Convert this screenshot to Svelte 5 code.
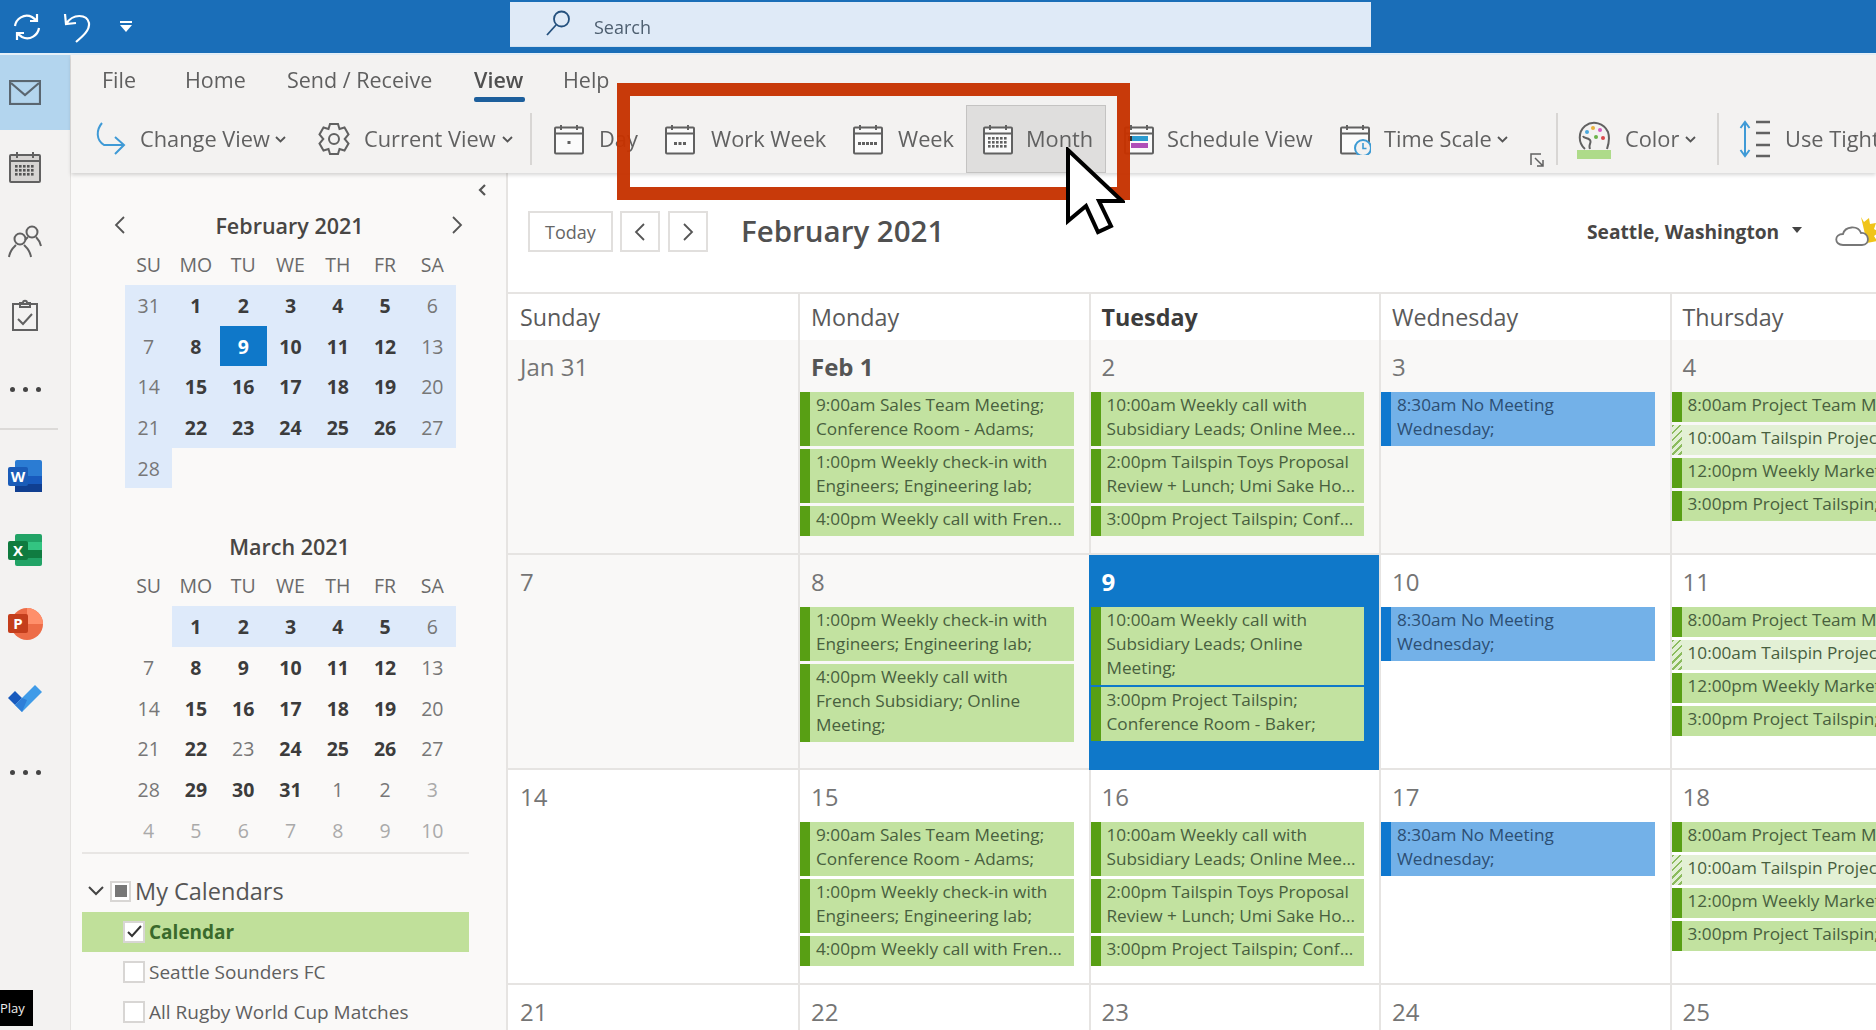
<script>
  const tabs = [
    { t: 'File', w: 83 },
    { t: 'Home', w: 102 },
    { t: 'Send / Receive', w: 187 },
    { t: 'View', w: 89, on: true },
    { t: 'Help', w: 60 }
  ];

  const tools = [
    { t: 'Change View', i: 'change', w: 223, gap: 13, caret: true },
    { t: 'Current View', i: 'gear', w: 212, gap: 14, caret: true },
    { sep: true, w: 23 },
    { t: 'Day', i: 'day', w: 111, gap: 14 },
    { t: 'Work Week', i: 'ww', w: 188, gap: 15 },
    { t: 'Week', i: 'week', w: 114, gap: 14 },
    { t: 'Month', i: 'month', w: 140, gap: 12, pl: 15, on: true },
    { t: 'Schedule View', i: 'sched', w: 233, gap: 12, pl: 17 },
    { t: 'Time Scale', i: 'time', w: 191, gap: 13, caret: true },
    { i: 'expand', w: 26, small: true },
    { sep: true, w: 21 },
    { t: 'Color', i: 'color', w: 140, gap: 14, caret: true },
    { sep: true, w: 22 },
    { t: 'Use Tight Margins', i: 'tight', w: 260, gap: 14 }
  ];

  const dow = ['SU', 'MO', 'TU', 'WE', 'TH', 'FR', 'SA'];
  const rng = (a, b) => Array.from({ length: b - a + 1 }, (_, i) => a + i);

  // k: b = bold, w = weekend grey, x = lighter, s = selected; hl = shaded range
  const mk = (n, k, hl) => ({ n, k, hl });
  const feb = [
    mk(31, 'w', 1), ...rng(1, 5).map((n) => mk(n, 'b', 1)), mk(6, 'w', 1),
    mk(7, 'w', 1), mk(8, 'b', 1), mk(9, 's', 1), ...rng(10, 12).map((n) => mk(n, 'b', 1)), mk(13, 'w', 1),
    mk(14, 'w', 1), ...rng(15, 19).map((n) => mk(n, 'b', 1)), mk(20, 'w', 1),
    mk(21, 'w', 1), ...rng(22, 26).map((n) => mk(n, 'b', 1)), mk(27, 'w', 1),
    mk(28, 'w', 1)
  ];
  const mar = [
    mk('', '', 0), ...rng(1, 5).map((n) => mk(n, 'b', 1)), mk(6, 'w', 1),
    mk(7, 'w', 0), mk(8, 'b', 0), mk(9, 'b', 0), ...rng(10, 12).map((n) => mk(n, 'b', 0)), mk(13, 'w', 0),
    mk(14, 'w', 0), ...rng(15, 19).map((n) => mk(n, 'b', 0)), mk(20, 'w', 0),
    mk(21, 'w', 0), mk(22, 'b', 0), mk(23, 'w', 0), ...rng(24, 26).map((n) => mk(n, 'b', 0)), mk(27, 'w', 0),
    mk(28, 'w', 0), ...rng(29, 31).map((n) => mk(n, 'b', 0)), mk(1, 'w', 0), mk(2, 'w', 0), mk(3, 'x', 0),
    ...[4, 5, 6, 7, 8, 9, 10].map((n) => mk(n, 'x', 0))
  ];
  const months = [
    { name: 'February 2021', cells: feb, nav: true },
    { name: 'March 2021', cells: mar }
  ];

  const sales = '9:00am Sales Team Meeting;\nConference Room - Adams;';
  const checkin = '1:00pm Weekly check-in with\nEngineers; Engineering lab;';
  const fren = '4:00pm Weekly call with Fren...';
  const subs = '10:00am Weekly call with\nSubsidiary Leads; Online Mee...';
  const umi = '2:00pm Tailspin Toys Proposal\nReview + Lunch; Umi Sake Ho...';
  const conf = '3:00pm Project Tailspin; Conf...';
  const noMeet = '8:30am No Meeting\nWednesday;';
  const thu = [
    { t: '8:00am Project Team Meeting; Room' },
    { t: '10:00am Tailspin Project Review', tent: true },
    { t: '12:00pm Weekly Marketing Sync' },
    { t: '3:00pm Project Tailspin; Conference' }
  ];
  const g = (...l) => l.map((t) => ({ t }));
  const blue = [{ t: noMeet, blue: true }];
  const mon = g(sales, checkin, fren);
  const tue = g(subs, umi, conf);

  const rows = [
    { past: true, cells: [
      { d: 'Jan 31' }, { d: 'Feb 1', bold: true, ev: mon }, { d: '2', ev: tue }, { d: '3', ev: blue }, { d: '4', ev: thu }
    ] },
    { cells: [
      { d: '7', past: true },
      { d: '8', past: true, ev: g(checkin, '4:00pm Weekly call with\nFrench Subsidiary; Online\nMeeting;') },
      { d: '9', today: true, ev: g('10:00am Weekly call with\nSubsidiary Leads; Online\nMeeting;', '3:00pm Project Tailspin;\nConference Room - Baker;') },
      { d: '10', ev: blue }, { d: '11', ev: thu }
    ] },
    { cells: [
      { d: '14' }, { d: '15', ev: mon }, { d: '16', ev: tue }, { d: '17', ev: blue }, { d: '18', ev: thu }
    ] },
    { cells: [{ d: '21' }, { d: '22' }, { d: '23' }, { d: '24' }, { d: '25' }] }
  ];
  const heads = ['Sunday', 'Monday', 'Tuesday', 'Wednesday', 'Thursday'];
  const dots = (xs, ys) => xs.flatMap((x) => ys.map((y) => ({ x, y })));
</script>

{#snippet cal(kind)}
  <svg width="32" height="32" viewBox="0 0 32 32" fill="none" stroke="#616161" stroke-width="2">
    <rect x="2" y="4.5" width="28" height="26" rx="1" fill="#fbfbfb" />
    <path d="M2 10.5h28M8 2v5M24 2v5" />
    {#if kind === 'day'}
      <rect x="14.5" y="18" width="3" height="3" fill="#616161" stroke="none" />
    {:else if kind === 'ww'}
      {#each [10, 14.5, 19] as x}<rect {x} y="19" width="3" height="3" fill="#616161" stroke="none" />{/each}
    {:else if kind === 'week'}
      {#each [6, 10, 14, 18, 22] as x}<rect {x} y="19" width="3" height="3" fill="#616161" stroke="none" />{/each}
    {:else if kind === 'month'}
      {#each dots([6, 10, 14, 18, 22], [14, 18, 22]) as p}<rect x={p.x} y={p.y} width="2.6" height="2.6" fill="#616161" stroke="none" />{/each}
    {:else if kind === 'sched'}
      <rect x="8" y="13" width="17" height="5" fill="#2b9bd0" stroke="none" />
      <rect x="8" y="20" width="17" height="5" fill="#b04fb8" stroke="none" />
      <rect x="5" y="13" width="4" height="5" fill="#333" stroke="none" />
    {:else if kind === 'time'}
      <circle cx="24" cy="25" r="8" fill="#f3f2f1" stroke="#3d9bd4" />
      <path d="M24 20v5.5h3.5" stroke="#3d9bd4" stroke-width="1.6" />
    {/if}
  </svg>
{/snippet}

{#snippet toolIcon(i)}
  {#if i === 'change'}
    <svg width="32" height="38" viewBox="0 0 32 38" fill="none" stroke="#3f9ad6" stroke-width="2">
      <path d="M7 3C1 10 1 20 9 25h20M20 17l9 8-9 9" />
    </svg>
  {:else if i === 'gear'}
    <svg width="32" height="36" viewBox="0 0 32 36" fill="none" stroke="#616161" stroke-width="2">
      <path d="M12 3h8l1.500 5 5-1.500 4 7-3.800 4.500 3.800 4.500-4 7-5-1.500L20 33h-8l-1.500-5-5 1.500-4-7L5.300 18 1.500 13.500l4-7 5 1.500z" />
      <circle cx="16" cy="18" r="5" />
    </svg>
  {:else if i === 'color'}
    <svg width="34" height="40" viewBox="0 0 34 40" fill="none">
      <path d="M8 30C1 24 1 13 8 7c8-6 19-3 23 6 2 6 1 11-1 17M13 30c-2-5 2-6 0-9-3-3-6-1-7-4" stroke="#616161" stroke-width="2" />
      <circle cx="16" cy="9" r="2" fill="#e9b23c" /><circle cx="23" cy="11" r="2" fill="#d85ac0" />
      <circle cx="10" cy="13" r="2" fill="#4aa8dd" /><circle cx="26" cy="19" r="2" fill="#d9474b" />
      <circle cx="19" cy="18" r="2" fill="#6bb24a" />
      <rect x="0" y="31" width="34" height="9" fill="#aedb8a" />
    </svg>
  {:else if i === 'tight'}
    <svg width="32" height="40" viewBox="0 0 32 40" fill="none" stroke-width="2.500">
      <path d="M6 3v34M1.500 9 6 3l4.500 6M1.500 31 6 37l4.500-6" stroke="#3f9ad6" stroke-width="2" />
      <path d="M17 3h14M17 14h14M17 26h14M17 37h14" stroke="#616161" />
    </svg>
  {:else if i === 'expand'}
    <svg width="15" height="15" viewBox="0 0 15 15" fill="none" stroke="#616161" stroke-width="1.500">
      <path d="M11 1H1v11M5 5l8 8M13 7v6H7" />
    </svg>
  {:else}
    {@render cal(i)}
  {/if}
{/snippet}

<div class="app">
  <header class="titlebar">
    <div class="qat">
      <svg width="30" height="30" viewBox="0 0 30 30" fill="none" stroke="#fff" stroke-width="2.200">
        <path d="M3 14C4 7 12 1 20 5l4 3M25 2v7h-7M27 16c-1 7-9 13-17 9l-4-3M5 28v-7h7" />
      </svg>
      <svg class="undo" width="28" height="32" viewBox="0 0 28 32" fill="none" stroke="#fff" stroke-width="2.200">
        <path d="M3 13C10 2 24 3 26 12c1 7-6 13-13 19M2 3l1 10 10-1" />
      </svg>
      <svg class="more" width="14" height="12" viewBox="0 0 14 12" fill="#fff">
        <rect x="1" y="0" width="12" height="2" /><path d="M1 4h12l-6 7z" />
      </svg>
    </div>
    <div class="search">
      <svg width="26" height="26" viewBox="0 0 26 26" fill="none" stroke="#24507d" stroke-width="1.800">
        <circle cx="16.500" cy="9" r="7.500" /><path d="M11 15 2 25" />
      </svg>
      <span>Search</span>
    </div>
  </header>

  <div class="body">
    <nav class="rail">
      <div class="rail-btn sel">
        <svg width="32" height="25" viewBox="0 0 32 25" fill="none" stroke="#5a6670" stroke-width="2.200">
          <rect x="1" y="1" width="30" height="23" /><path d="m2 3 14 12L30 3" />
        </svg>
      </div>
      <div class="rail-btn">
        <svg width="32" height="32" viewBox="0 0 32 32" fill="#d6d4d2" stroke="#616161" stroke-width="2">
          <rect x="1" y="4" width="30" height="27" rx="1" /><path d="M1 10h30M8 1v6M24 1v6" />
          {#each dots([6, 10, 14, 18, 22], [14, 18, 22]) as p}<rect x={p.x} y={p.y} width="2.600" height="2.600" fill="#555" stroke="none" />{/each}
        </svg>
      </div>
      <div class="rail-btn">
        <svg width="34" height="33" viewBox="0 0 34 33" fill="none" stroke="#616161" stroke-width="2">
          <circle cx="12" cy="14" r="5.500" /><path d="M1 32c1-7 5-10 7-12M23 32c-1-7-5-10-7-12" />
          <circle cx="24" cy="7" r="5.500" /><path d="M20 12c-1 1-2 2-3 3M28 12c2 2 4 5 5 9" />
        </svg>
      </div>
      <div class="rail-btn">
        <svg width="26" height="32" viewBox="0 0 26 32" fill="none" stroke="#616161" stroke-width="2">
          <rect x="1" y="5" width="24" height="26" /><path d="M8 8V4h3c0-3 4-3 4 0h3v4zM6 20l5 5 9-10" />
        </svg>
      </div>
      <div class="rail-btn"><i class="dots"><b></b><b></b><b></b></i></div>
      <div class="rail-sep"></div>
      <div class="rail-btn">
        <svg width="36" height="32" viewBox="0 0 36 32">
          <rect x="8" y="0" width="27" height="32" rx="2" fill="#2b7cd3" />
          <rect x="8" y="16" width="27" height="8" fill="#185abd" /><rect x="8" y="24" width="27" height="8" fill="#103f91" />
          <rect x="1" y="7" width="20" height="19" rx="2" fill="#1a5cb8" />
          <text x="11" y="22" class="ico-t" text-anchor="middle">W</text>
        </svg>
      </div>
      <div class="rail-btn">
        <svg width="36" height="32" viewBox="0 0 36 32">
          <rect x="8" y="0" width="27" height="32" rx="2" fill="#21a366" />
          <rect x="21" y="8" width="14" height="8" fill="#33c481" /><rect x="21" y="16" width="14" height="8" fill="#107c41" />
          <rect x="1" y="7" width="20" height="19" rx="2" fill="#0f7b3f" />
          <text x="11" y="22" class="ico-t" text-anchor="middle">X</text>
        </svg>
      </div>
      <div class="rail-btn">
        <svg width="36" height="34" viewBox="0 0 36 34">
          <circle cx="20" cy="17" r="16" fill="#ed6c47" /><path d="M20 1a16 16 0 0 1 16 16H20z" fill="#ff8f6b" />
          <rect x="1" y="7" width="20" height="19" rx="2" fill="#c43e1c" />
          <text x="11" y="22" class="ico-t" text-anchor="middle">P</text>
        </svg>
      </div>
      <div class="rail-btn">
        <svg width="36" height="28" viewBox="0 0 36 28">
          <path d="M1 14 8 7l7 7-7 7z" fill="#185abd" /><path d="M8 21 28 1l7 7-20 20z" fill="#3f9be8" /><path d="m8 21 7-7 5 2-5 12z" fill="#2f7fd8" />
        </svg>
      </div>
      <div class="rail-btn"><i class="dots"><b></b><b></b><b></b></i></div>
    </nav>

    <div class="right">
      <section class="ribbon">
        <div class="tabs">
          {#each tabs as tab}
            <div class="tab" class:on={tab.on} style="width:{tab.w}px"><span>{tab.t}</span></div>
          {/each}
        </div>
        <div class="tools">
          {#each tools as tool}
            {#if tool.sep}
              <div class="sep-wrap" style="width:{tool.w}px"><div class="sep"></div></div>
            {:else}
              <div class="tool" class:on={tool.on} class:small={tool.small} style="width:{tool.w}px;padding-left:{tool.pl || 0}px;gap:{tool.gap || 0}px">
                {@render toolIcon(tool.i)}
                {#if tool.t}<span>{tool.t}</span>{/if}
                {#if tool.caret}
                  <svg class="caret" width="11" height="7" viewBox="0 0 11 7" fill="none" stroke="#555" stroke-width="1.800"><path d="m1 1 4.500 4.500L10 1" /></svg>
                {/if}
              </div>
            {/if}
          {/each}
        </div>
      </section>

      <div class="lower">
        <aside class="side">
          <div class="collapse">
            <svg width="10" height="12" viewBox="0 0 10 12" fill="none" stroke="#555" stroke-width="2.200"><path d="M8 1 3 6l5 5" /></svg>
          </div>
          {#each months as m}
            <div class="month">
              <div class="m-head">
                {#if m.nav}
                  <svg width="12" height="18" viewBox="0 0 12 18" fill="none" stroke="#555" stroke-width="1.800"><path d="M10 1 2 9l8 8" /></svg>
                {/if}
                <strong>{m.name}</strong>
                {#if m.nav}
                  <svg width="12" height="18" viewBox="0 0 12 18" fill="none" stroke="#555" stroke-width="1.800"><path d="m2 1 8 8-8 8" /></svg>
                {/if}
              </div>
              <div class="m-grid">
                {#each dow as d}<div class="dow">{d}</div>{/each}
                {#each m.cells as c}
                  <div class="c {c.k}" class:hl={c.hl}>{c.n}</div>
                {/each}
              </div>
            </div>
          {/each}
          <div class="cal-list">
            <div class="group">
              <svg width="16" height="10" viewBox="0 0 16 10" fill="none" stroke="#444" stroke-width="2"><path d="m1 1 7 7 7-7" /></svg>
              <span class="box mixed"><i></i></span>
              <span>My Calendars</span>
            </div>
            <div class="cal-item active">
              <span class="box">
                <svg width="15" height="13" viewBox="0 0 15 13" fill="none" stroke="#333" stroke-width="2"><path d="m1 7 4 4 9-10" /></svg>
              </span>
              <span>Calendar</span>
            </div>
            <div class="cal-item"><span class="box"></span><span>Seattle Sounders FC</span></div>
            <div class="cal-item"><span class="box"></span><span>All Rugby World Cup Matches</span></div>
          </div>
        </aside>

        <main class="main">
          <div class="cal-top">
            <button class="today-btn">Today</button>
            <button class="arrow">
              <svg width="12" height="20" viewBox="0 0 12 20" fill="none" stroke="#555" stroke-width="1.800"><path d="M10 2 2 10l8 8" /></svg>
            </button>
            <button class="arrow">
              <svg width="12" height="20" viewBox="0 0 12 20" fill="none" stroke="#555" stroke-width="1.800"><path d="m2 2 8 8-8 8" /></svg>
            </button>
            <h1>February 2021</h1>
            <div class="weather">
              <strong>Seattle, Washington</strong>
              <svg class="w-caret" width="10" height="6" viewBox="0 0 10 6" fill="#444"><path d="M0 0h10L5 6z" /></svg>
              <svg class="cloud" width="44" height="34" viewBox="0 0 44 34">
                <path d="m26 2 3 5 5-4 1 6 6-1-2 6 5 3-5 4 3 5-10 2z" fill="#f0c419" />
                <path d="M8 30c-9 0-9-11 0-11 2-8 15-9 18-1 8-1 10 12 1 12z" fill="#fff" stroke="#777" stroke-width="1.800" />
              </svg>
            </div>
          </div>

          <div class="grid-head">
            {#each heads as h, i}
              <div class="head" class:bold={i === 2}>{h}</div>
            {/each}
          </div>
          {#each rows as row}
            <div class="week">
              {#each row.cells as cell}
                <div class="day" class:past={row.past || cell.past} class:today={cell.today}>
                  <div class="num" class:bold={cell.bold || cell.today}>{cell.d}</div>
                  {#if cell.ev}
                    <div class="events">
                      {#each cell.ev as e}
                        <div class="ev" class:blue={e.blue} class:tent={e.tent}>{e.t}</div>
                      {/each}
                    </div>
                  {/if}
                </div>
              {/each}
            </div>
          {/each}
        </main>
      </div>
    </div>
  </div>

  <div class="callout"></div>
  <svg class="pointer" width="60" height="90" viewBox="0 0 60 90">
    <path d="M3 3v71l18-15 12 26 13-6-12-25h23z" fill="#fff" stroke="#000" stroke-width="4" stroke-linejoin="miter" />
  </svg>
  <div class="play">Play</div>
</div>

<style>
  :global(body) { margin: 0; background: #fff; }
  .app {
    position: relative; width: 1876px; height: 1030px; overflow: hidden;
    display: flex; flex-direction: column;
    font-family: "Open Sans", "Noto Sans", sans-serif; color: #555;
    filter: blur(0.5px);
  }
  .titlebar { height: 53px; flex: none; background: #1a6eb8; display: flex; align-items: flex-start; position: relative; border-bottom: 2px solid #e6f0f8; }
  .qat { width: 510px; height: 53px; flex: none; display: flex; align-items: center; padding-left: 12px; box-sizing: border-box; }
  .undo { margin-left: 21px; }
  .more { margin-left: 28px; }
  .search {
    width: 861px; height: 45px; margin-top: 2px; background: #dfeaf7; display: flex; align-items: center;
    padding-left: 35px; box-sizing: border-box; gap: 23px; color: #4e5f70; font-size: 18px;
    border-bottom: 1px solid #cfe0f0;
  }
  .search svg { margin-top: -3px; }
  .search span { margin-top: 6px; }

  .body { display: flex; flex: 1; min-height: 0; }
  .rail { width: 71px; flex: none; background: #f3f2f1; border-right: 1px solid #e4e2e0; box-sizing: border-box; display: flex; flex-direction: column; }
  .rail-btn { height: 74px; display: flex; align-items: center; justify-content: center; padding-right: 20px; flex: none; }
  .rail-btn.sel { background: #b3d5ee; height: 75px; }
  .rail-sep { height: 2px; width: 58px; background: #dcdad8; flex: none; margin: 2px 0 9px; }
  .dots { display: flex; gap: 8px; }
  .dots b { width: 5px; height: 5px; background: #444; border-radius: 50%; }
  .ico-t { font: 700 15px "Open Sans", sans-serif; fill: #fff; }

  .right { flex: 1; min-width: 0; display: flex; flex-direction: column; }
  .ribbon { height: 118px; flex: none; background: #f3f2f1; box-shadow: 0 2px 4px rgba(0, 0, 0, .16); position: relative; z-index: 1; }
  .tabs { height: 50px; display: flex; padding-left: 31px; font-size: 21.500px; color: #5f5f5f; }
  .tab { flex: none; display: flex; }
  .tab span { position: relative; line-height: 50px; white-space: nowrap; }
  .tab.on span { font-weight: 600; color: #505050; }
  .tab.on span::after { content: ""; position: absolute; left: 0; right: -2px; bottom: 3px; height: 5px; background: #1d5f9c; border-radius: 2px; }
  .tools { height: 68px; display: flex; align-items: center; padding-left: 24px; font-size: 21.800px; color: #616161; }
  .tool { height: 68px; flex: none; display: flex; align-items: center; box-sizing: border-box; white-space: nowrap; }
  .tool span { margin-top: -2px; }
  .tool.on { background: #dfdedd; border: 1px solid #c4c3c2; }
  .tool.small { align-items: flex-end; padding-bottom: 5px; }
  .caret { margin-left: -8px; }
  .sep-wrap { flex: none; }
  .sep { width: 2px; height: 52px; background: #d8d6d4; }

  .lower { flex: 1; min-height: 0; display: flex; }
  .side { width: 437px; flex: none; background: #faf9f8; border-right: 2px solid #e6e4e2; box-sizing: border-box; }
  .collapse { height: 30px; display: flex; align-items: center; justify-content: flex-end; padding: 4px 19px 0 0; box-sizing: border-box; }
  .month { margin-left: 54px; width: 331px; margin-bottom: 36px; }
  .m-head { height: 44px; margin: 0 -9px 0 -11px; display: flex; align-items: center; justify-content: center; position: relative; font-size: 21.500px; color: #484644; }
  .m-head strong { font-weight: 600; }
  .m-head svg { position: absolute; }
  .m-head svg:first-child { left: 0; }
  .m-head svg:last-child { right: 2px; }
  .m-grid { display: grid; grid-template-columns: repeat(7, 1fr); grid-template-rows: 38px; grid-auto-rows: 40.700px; }
  .dow { display: flex; align-items: center; justify-content: center; padding-bottom: 4px; font-size: 19.500px; color: #6a6a6a; }
  .c { display: flex; align-items: center; justify-content: center; font-size: 19.500px; color: #777; }
  .c.hl { background: #deeafa; }
  .c.b { font-weight: 700; color: #3c3c3c; }
  .c.x { color: #aaa; }
  .c.s { font-weight: 700; color: #fff; background: #0f78c9; }

  .cal-list { margin: 5px 37px 0 11px; border-top: 2px solid #e8e6e4; padding-top: 19px; font-size: 19px; color: #5f5f5f; }
  .month + .cal-list { margin-top: -35px; }
  .group { display: flex; align-items: center; font-size: 23.500px; height: 39px; margin-top: -1px; margin-bottom: 1px; color: #555; }
  .group svg { margin: 0 6px 0 6px; }
  .group .box { margin-right: 4px; width: 21px; height: 21px; }
  .box { width: 22px; height: 22px; flex: none; box-sizing: border-box; background: #fff; border: 2px solid #d8d6d4; display: flex; align-items: center; justify-content: center; margin-right: 4px; }
  .mixed i { width: 12px; height: 12px; background: #777; }
  .cal-item { height: 40.500px; display: flex; align-items: center; padding-left: 41px; }
  .cal-item.active { background: #c0e09a; height: 40px; font-weight: 700; color: #3a6a2c; }

  .main { flex: 1; min-width: 0; overflow: hidden; background: #fff; }
  .cal-top { height: 119px; box-sizing: border-box; padding: 38px 0 0 20px; display: flex; align-items: flex-start; white-space: nowrap; }
  .today-btn, .arrow {
    height: 41px; background: #fff; border: 2px solid #e1dfdd; padding: 0; font: 18px "Open Sans", sans-serif; color: #666;
    display: flex; align-items: center; justify-content: center; flex: none;
  }
  .today-btn { width: 85px; margin-right: 7px; }
  .arrow { width: 40px; margin-right: 8px; }
  h1 { margin: 0 0 0 25px; width: 846px; flex: none; line-height: 39px; font-size: 29.500px; font-weight: 600; color: #505050; }
  .weather { display: flex; align-items: center; height: 41px; font-size: 19.200px; color: #484644; }
  .weather strong { font-weight: 700; }
  .w-caret { margin: 0 0 4px 13px; }
  .cloud { margin-left: 33px; }

  .grid-head, .week { display: grid; grid-template-columns: 290px repeat(4, 290.500px); width: 1452px; }
  .grid-head { height: 48px; border-top: 2px solid #e6e4e2; box-sizing: border-box; }
  .head { border-left: 2px solid #e6e4e2; padding-left: 11px; font-size: 23.300px; line-height: 46px; color: #5a5a5a; }
  .head:first-child { border-left: 0; padding-left: 12px; }
  .head.bold { font-weight: 700; color: #3c3c3c; }
  .week { height: 215px; overflow: hidden; }
  .day { border-left: 2px solid #e6e4e2; border-bottom: 2px solid #e6e4e2; box-sizing: border-box; min-width: 0; }
  .day:first-child { border-left: 0; }
  .day.past { background: #f9f8f7; }
  .num { height: 52px; padding-left: 11px; line-height: 54px; font-size: 24px; color: #757575; box-sizing: border-box; }
  .day:first-child .num { padding-left: 12px; }
  .num.bold { font-weight: 700; color: #555; }
  .day.today { background: #0f78c9; border-left-color: #0f78c9; border-bottom-color: #0f78c9; }
  .day.today .num { color: #fff; }
  .day.today .events { gap: 2px; }
  .events { display: flex; flex-direction: column; gap: 3px; padding-right: 15px; }
  .ev {
    background: #c2e2a0; border-left: 10px solid #589f14; padding: 1px 0 5px 6px;
    font-size: 17.200px; line-height: 24px; color: #485f3e; white-space: pre; overflow: hidden;
  }
  .ev.blue { background: #73b1e8; border-left-color: #0f78cf; color: #2c4e73; }
  .ev.tent {
    border-left: 0; padding-left: 16px;
    background: repeating-linear-gradient(135deg, #8cbb5e 0 2px, #e3f0d5 2px 5px) 0 0 / 10px 100% no-repeat, #e3f0d5;
  }

  .callout { position: absolute; z-index: 2; left: 617px; top: 83px; width: 513px; height: 117px; box-sizing: border-box; border: 13px solid rgba(198, 50, 0, .96); pointer-events: none; }
  .pointer { position: absolute; z-index: 3; left: 1065px; top: 147px; }
  .play { position: absolute; z-index: 3; left: 0; top: 990px; width: 33px; height: 36px; background: #000; color: #eee; font: 13px/36px "Open Sans", sans-serif; overflow: hidden; white-space: nowrap; }
</style>
